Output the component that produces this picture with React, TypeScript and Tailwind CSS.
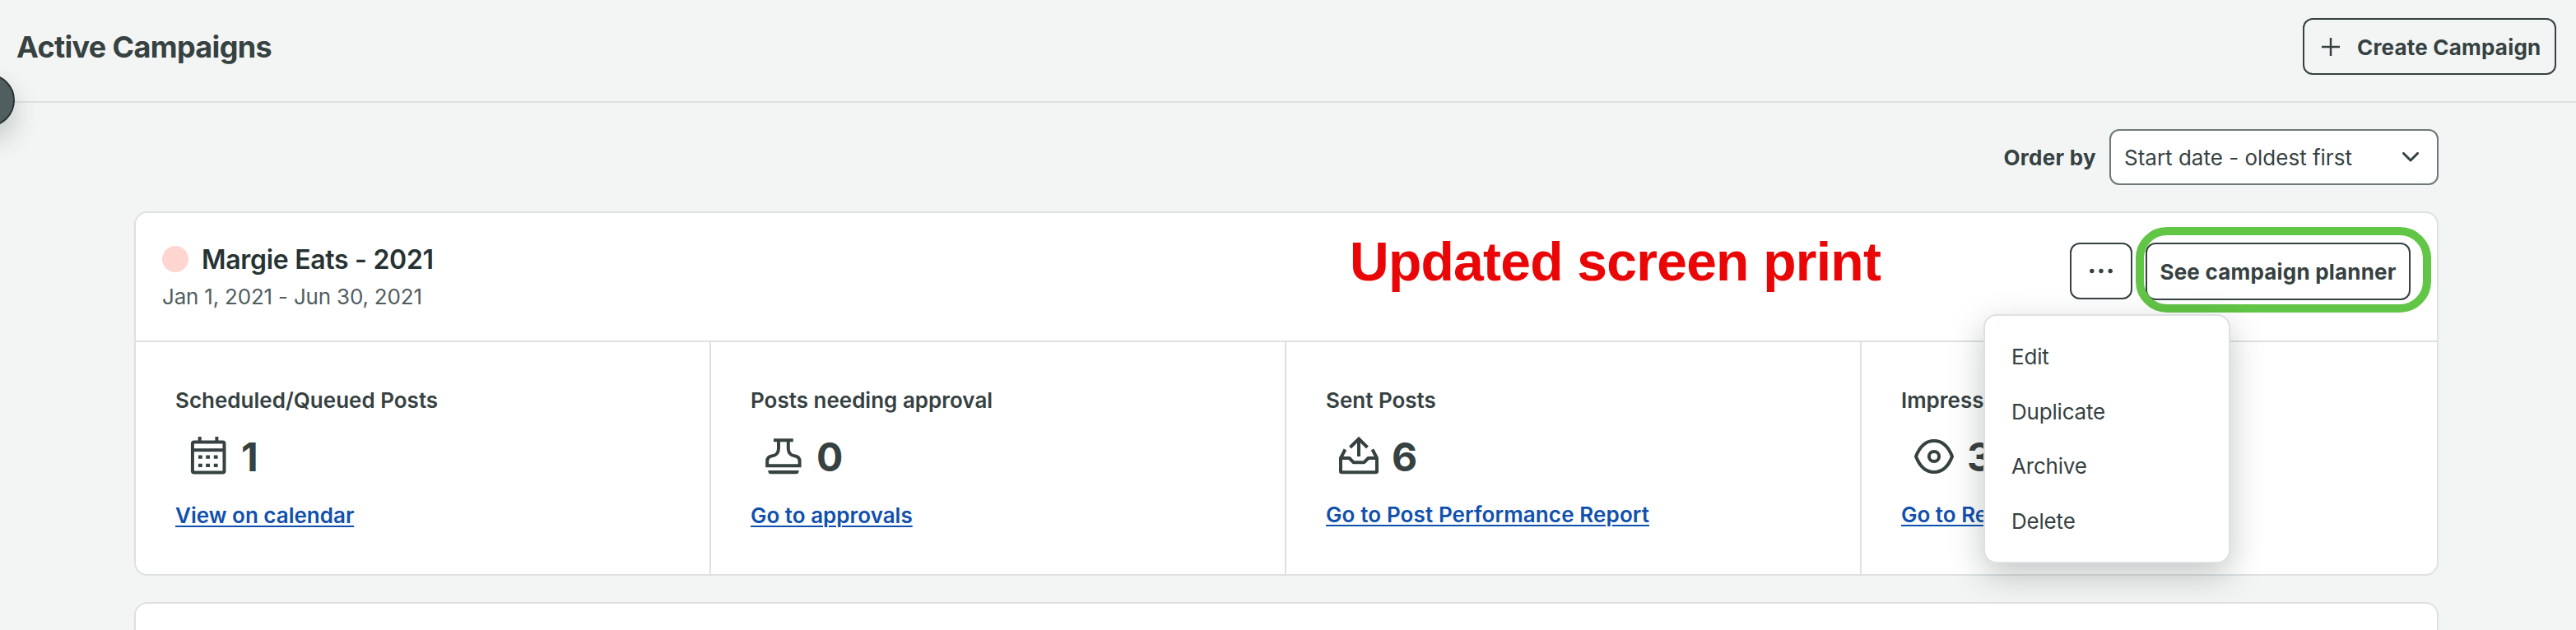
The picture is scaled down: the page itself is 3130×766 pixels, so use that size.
import React from 'react';
import type { ReactNode } from 'react';

interface Stat { label: string; value: string; link: string; icon: ReactNode; linkClass: string; }

function CalendarIcon() {
  return (
    <svg className="w-12 h-12" viewBox="0 0 48 48" fill="none" stroke="currentColor" strokeWidth="4">
      <rect x="4.9" y="7.4" width="38.6" height="37" rx="2" />
      <path d="M4 17.3H44M13.7 1V8M34.4 1V8" />
      <path d="M12 25.7h4.8M21.2 25.7H26M30.8 25.7h4.8M12 35.9h4.8M21.2 35.9H26M30.8 35.9h4.8" strokeWidth="4.2" />
    </svg>
  );
}

function StampIcon() {
  return (
    <svg className="w-12 h-12" viewBox="0 0 48 48" fill="none" stroke="currentColor" strokeWidth="4">
      <path d="M12 5.3H35.8M18 6V15C18 21 14.5 24 10.5 24.3C6.5 24.8 4.2 27 4.2 31V36.2H43.6V31C43.6 27 41.3 24.8 37.3 24.3C33.3 24 29.8 21 29.8 15V6" />
      <path d="M5.3 42H42.7C42.7 45 41.5 46.3 39.5 46.3H8.5C6.5 46.3 5.3 45 5.3 42Z" fill="currentColor" stroke="none" />
    </svg>
  );
}

function SentIcon() {
  return (
    <svg className="w-12 h-12" viewBox="0 0 48 48" fill="none" stroke="currentColor" strokeWidth="4">
      <path d="M2 27V43Q2 44.3 3.5 44.3H44.5Q46 44.3 46 43V27H35.5L30.5 32.2H17.5L12.5 27H2L7.5 16.5M46 27L40.5 16.5" strokeLinejoin="round" />
      <path d="M24 25V4M13.5 14L24 3.5L34.5 14" />
    </svg>
  );
}

function EyeIcon() {
  return (
    <svg className="w-12 h-12" viewBox="0 0 48 48" fill="none" stroke="currentColor" strokeWidth="4">
      <path d="M2 25C7 12 15 6 24 6C33 6 41 12 46 25C41 38 33 44 24 44C15 44 7 38 2 25Z" strokeLinejoin="round" />
      <circle cx="24" cy="25" r="6.1" />
    </svg>
  );
}

const stats: Stat[] = [
  { label: 'Scheduled/Queued Posts', value: '1', link: 'View on calendar', icon: <CalendarIcon />, linkClass: 'mt-[19px]' },
  { label: 'Posts needing approval', value: '0', link: 'Go to approvals', icon: <StampIcon />, linkClass: 'mt-[19px]' },
  { label: 'Sent Posts', value: '6', link: 'Go to Post Performance Report', icon: <SentIcon />, linkClass: 'mt-[18px] tracking-[0.12px]' },
  { label: 'Impressions', value: '3', link: 'Go to Report', icon: <EyeIcon />, linkClass: 'mt-[18px]' },
];

const menuItems = ['Edit', 'Duplicate', 'Archive', 'Delete'];

export default function App() {
  return (
    <div className="relative w-[3130px] h-[766px] overflow-hidden bg-[#f3f5f4] font-['Inter',sans-serif] text-[26px] text-[#364141]">
      <header className="flex items-start justify-between h-[125px] pl-5 pr-6 border-b-2 border-[#dee1e1]">
        <h1 className="mt-[35px] text-[36px] leading-[44px] font-bold tracking-[-0.65px]">Active Campaigns</h1>
        <button className="flex items-center mt-[22px] w-[308px] h-[69px] pl-[20px] rounded-xl border-2 border-[#364141] font-bold tracking-[0.2px] whitespace-nowrap">
          <svg className="w-6 h-6 mr-5" viewBox="0 0 24 24" stroke="currentColor" strokeWidth="2.5"><path d="M12 1V23M1 12H23" /></svg>
          <span className="pt-0.5">Create Campaign</span>
        </button>
      </header>

      <div className="flex justify-end items-center gap-4 mt-8 pr-[167px] h-[68px]">
        <span className="font-bold tracking-[0.3px]">Order by</span>
        <button className="flex items-center justify-between w-[400px] h-[68px] pl-4 pr-[22px] rounded-xl border-2 border-[#6e797a] bg-white">
          <span>Start date - oldest first</span>
          <svg className="w-5 h-3" viewBox="0 0 20 12" fill="none" stroke="currentColor" strokeWidth="3" strokeLinecap="round" strokeLinejoin="round"><path d="M1.5 1.5L10 10L18.5 1.5" /></svg>
        </button>
      </div>

      <main className="flex flex-col gap-8 mt-8 pl-[163px] w-[2963px]">
        <section className="h-[443px] rounded-2xl border-2 border-[#dee1e1] bg-white">
          <div className="flex justify-between h-[155px] px-8 pt-9">
            <div>
              <div className="flex items-center gap-4 h-10">
                <span className="w-8 h-8 rounded-full bg-[#ffd5d2]" />
                <h2 className="pt-0.5 text-[32px] leading-10 font-semibold tracking-[-0.3px] text-[#273333]">Margie Eats - 2021</h2>
              </div>
              <p className="mt-2 leading-9 tracking-[-0.2px] text-[#515e5f]">Jan 1, 2021 - Jun 30, 2021</p>
            </div>
            <div className="flex gap-4">
              <button className="flex items-center justify-center w-[76px] h-[69px] rounded-xl border-2 border-[#364141]">
                <svg className="w-7 h-6" viewBox="0 0 28 24" fill="currentColor"><circle cx="2.8" cy="11.5" r="2.7" /><circle cx="14" cy="11.5" r="2.7" /><circle cx="25.2" cy="11.5" r="2.7" /></svg>
              </button>
              <button className="w-[322px] h-[70px] rounded-xl border-2 border-[#364141] font-bold tracking-[0.2px] whitespace-nowrap">See campaign planner</button>
            </div>
          </div>
          <div className="grid grid-cols-4 h-[284px] border-t-2 border-[#dee1e1]">
            {stats.map((stat) => (
              <div key={stat.label} className="pl-12 pt-[51px] border-r-2 border-[#dee1e1] last:border-r-0">
                <h3 className="leading-10 font-semibold">{stat.label}</h3>
                <div className="flex items-center gap-4 mt-[13px] pl-4 h-[68px]">
                  {stat.icon}
                  <span className="pt-[3px] text-[48px] leading-[60px] font-bold">{stat.value}</span>
                </div>
                <a className={`block w-fit font-semibold text-[#1050ad] underline decoration-2 underline-offset-[3px] ${stat.linkClass}`}>{stat.link}</a>
              </div>
            ))}
          </div>
        </section>
        <section className="h-[443px] rounded-2xl border-2 border-[#dee1e1] bg-white" />
      </main>

      {/* sidebar toggle */}
      <span className="absolute left-[-46px] top-[90px] w-16 h-16 rounded-full border-2 border-[#273333] bg-[#515e5f] shadow-[0_16px_32px_rgba(39,51,51,0.24)]" />

      {/* annotations */}
      <span className="absolute left-[1640px] top-[269px] font-['Liberation_Sans',Arial,sans-serif] text-[66px] font-bold tracking-[-0.75px] text-[#ea0606] whitespace-nowrap">Updated screen print</span>
      <span className="absolute left-[2595px] top-[276px] w-[359px] h-[104px] rounded-[38px] border-10 border-[#61c546]" />

      <div className="absolute left-[2410px] top-[382px] w-[300px] h-[303px] pt-4 pl-8 rounded-2xl border-2 border-[#dee1e1] bg-white tracking-[-0.2px] shadow-[0_14px_40px_rgba(39,51,51,0.28)]">
        {menuItems.map((item) => (
          <div key={item} className="flex items-center h-[66.7px]">{item}</div>
        ))}
      </div>
    </div>
  );
}
